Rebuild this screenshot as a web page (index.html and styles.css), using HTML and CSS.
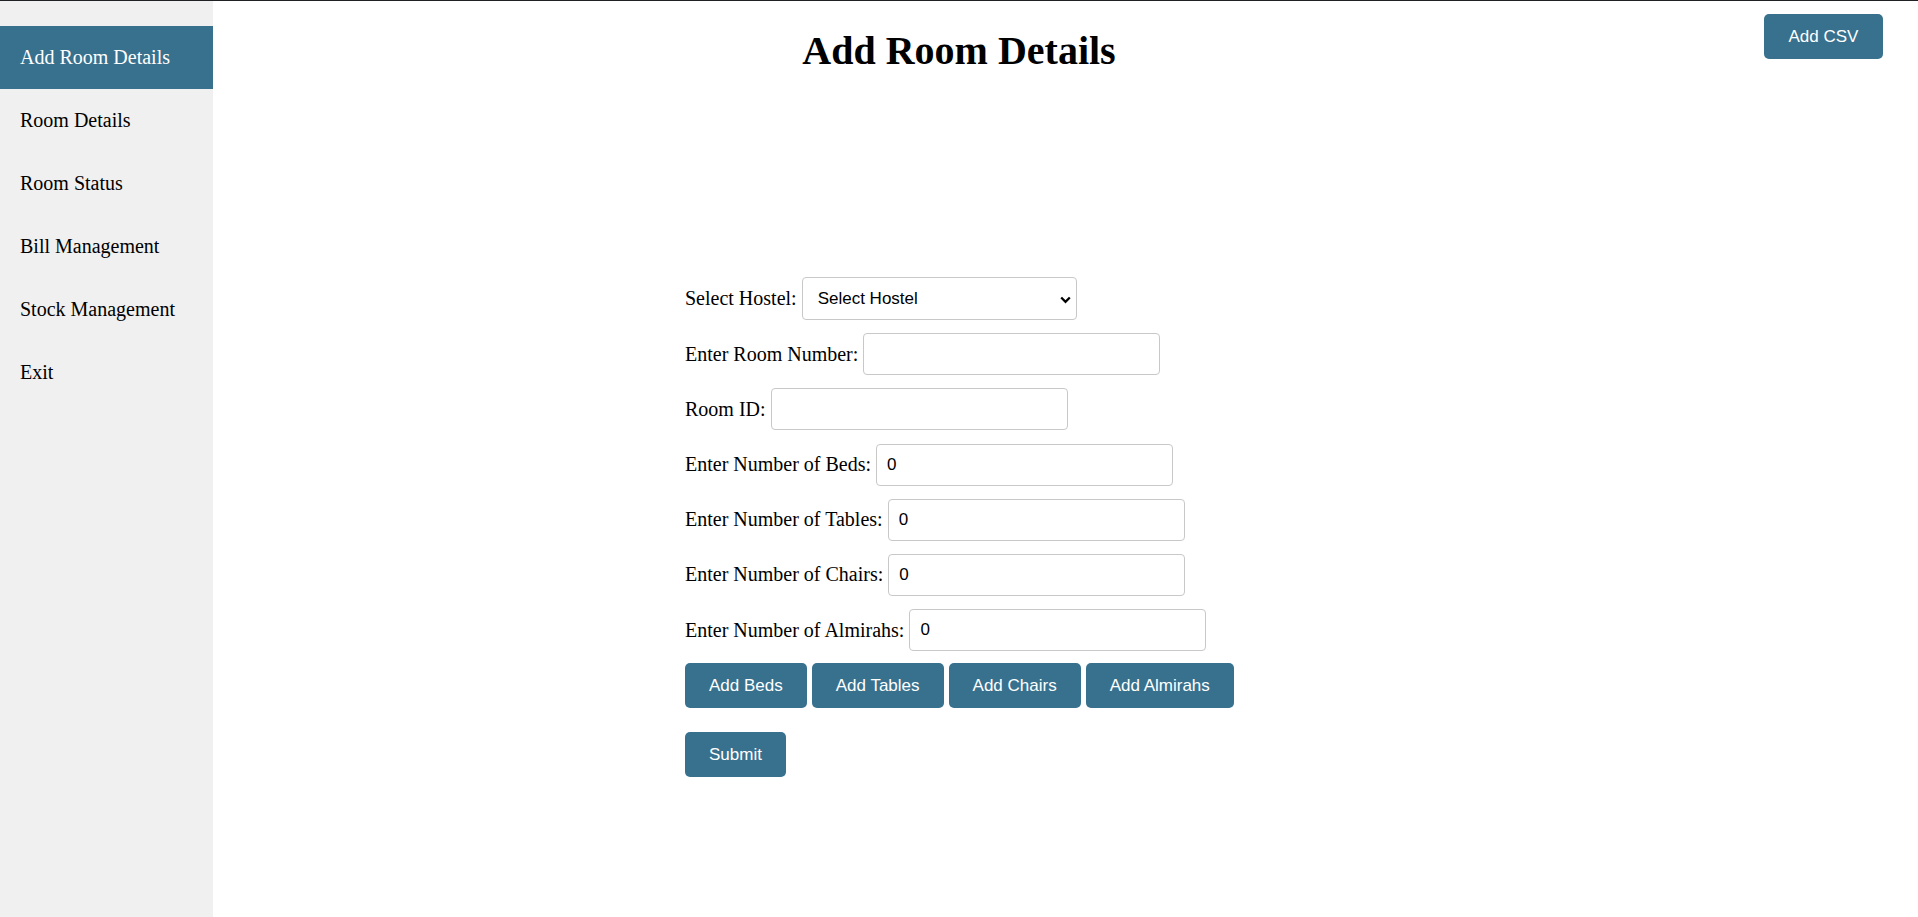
FILE: index.html
```html
<!DOCTYPE html>
<html lang="en">
<head>
<meta charset="utf-8">
<title>Add Room Details</title>
<link rel="stylesheet" href="styles.css">
</head>
<body>
<div class="layout">
  <nav class="sidebar">
    <a class="nav-item active" href="#">Add Room Details</a>
    <a class="nav-item" href="#">Room Details</a>
    <a class="nav-item" href="#">Room Status</a>
    <a class="nav-item" href="#">Bill Management</a>
    <a class="nav-item" href="#">Stock Management</a>
    <a class="nav-item" href="#">Exit</a>
  </nav>
  <main class="main">
    <h1 class="title">Add Room Details</h1>
    <button class="btn csv-btn" type="button">Add CSV</button>
    <form class="room-form">
      <div class="row">
        <label class="label" for="hostel">Select Hostel:</label>
        <div class="select-wrap">
          <select id="hostel" class="field select">
            <option>Select Hostel</option>
          </select>
          <svg class="chevron" width="11" height="8" viewBox="0 0 11 8"><path d="M1.2 1.5 L5.5 5.8 L9.8 1.5" fill="none" stroke="#000" stroke-width="2.3"/></svg>
        </div>
      </div>
      <div class="row">
        <label class="label" for="roomno">Enter Room Number:</label>
        <input id="roomno" class="field" type="text">
      </div>
      <div class="row">
        <label class="label" for="roomid">Room ID:</label>
        <input id="roomid" class="field" type="text">
      </div>
      <div class="row">
        <label class="label" for="beds">Enter Number of Beds:</label>
        <input id="beds" class="field" type="text" value="0">
      </div>
      <div class="row">
        <label class="label" for="tables">Enter Number of Tables:</label>
        <input id="tables" class="field" type="text" value="0">
      </div>
      <div class="row">
        <label class="label" for="chairs">Enter Number of Chairs:</label>
        <input id="chairs" class="field" type="text" value="0">
      </div>
      <div class="row">
        <label class="label" for="almirahs">Enter Number of Almirahs:</label>
        <input id="almirahs" class="field" type="text" value="0">
      </div>
      <div class="btn-row">
        <button class="btn" type="button">Add Beds</button>
        <button class="btn" type="button">Add Tables</button>
        <button class="btn" type="button">Add Chairs</button>
        <button class="btn" type="button">Add Almirahs</button>
      </div>
      <div class="submit-row">
        <button class="btn" type="submit">Submit</button>
      </div>
    </form>
  </main>
</div>
</body>
</html>
```
FILE: styles.css
```css
html, body {
  margin: 0;
  padding: 0;
}
body {
  border-top: 1px solid #202124;
  font-family: "Liberation Serif", "Times New Roman", serif;
  font-size: 20px;
  color: #000;
  background: #fff;
}
.layout {
  display: flex;
  min-height: 916px;
}
.sidebar {
  width: 213px;
  flex: none;
  background: #f0f0f0;
  padding-top: 25px;
  box-sizing: border-box;
}
.nav-item {
  display: block;
  padding: 20px 20px;
  line-height: 23px;
  color: #000;
  text-decoration: none;
}
.nav-item.active {
  background: #37718e;
  color: #fff;
}
.main {
  flex: 1;
  position: relative;
  padding-right: 213px;
}
.title {
  margin: 27px 0 0;
  font-size: 40px;
  line-height: 46px;
  font-weight: bold;
  text-align: center;
}
.btn {
  font-family: "Liberation Sans", Arial, sans-serif;
  font-size: 17px;
  color: #fff;
  background: #37718e;
  border: none;
  border-radius: 5px;
  height: 45px;
  padding: 0 24px;
  cursor: pointer;
}
.csv-btn {
  position: absolute;
  top: 13px;
  right: 35px;
  width: 119px;
  padding: 0;
}
.room-form {
  margin-top: 203px;
  padding-left: 472px;
}
.row {
  display: flex;
  align-items: center;
  gap: 5px;
  margin-bottom: 13.2px;
}
.label {
  line-height: 23px;
}
.field {
  box-sizing: border-box;
  width: 297px;
  height: 42px;
  border: 1px solid #c8c8c8;
  border-radius: 4px;
  padding: 0 10px;
  font-family: "Liberation Sans", Arial, sans-serif;
  font-size: 17px;
  color: #000;
  background: #fff;
  outline: none;
}
.select-wrap {
  position: relative;
}
.select {
  -webkit-appearance: none;
  appearance: none;
  width: 275px;
  height: 43px;
  padding-left: 15px;
}
.chevron {
  position: absolute;
  right: 6px;
  top: 19px;
  pointer-events: none;
}
.btn-row {
  display: flex;
  gap: 5px;
  margin-top: -1px;
}
.submit-row {
  margin-top: 24px;
}
```
